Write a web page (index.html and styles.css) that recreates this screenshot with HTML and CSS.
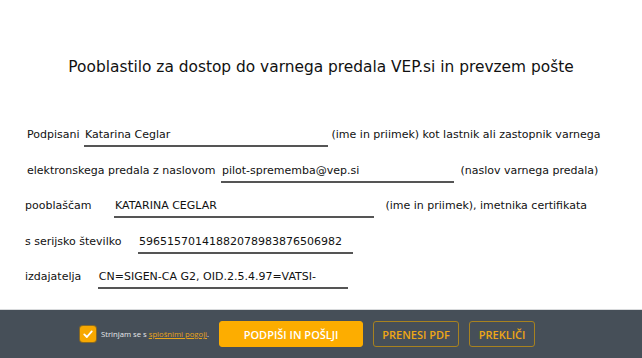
FILE: index.html
```html
<!DOCTYPE html>
<html lang="sl">
<head>
<meta charset="utf-8">
<title>Pooblastilo</title>
<link rel="stylesheet" href="styles.css">
</head>
<body>
<main class="doc">
  <h1 class="title">Pooblastilo za dostop do varnega predala VEP.si in prevzem pošte</h1>
  <div class="form">
    <p class="row row-a">Podpisani <span class="field f1">Katarina Ceglar</span> (ime in priimek) kot lastnik ali zastopnik varnega</p>
    <p class="row row-a">elektronskega predala z naslovom <span class="field f2">pilot-sprememba@vep.si</span> <span class="gap-l">(naslov varnega predala)</span></p>
    <p class="row row-b">pooblaščam <span class="field f3">KATARINA CEGLAR</span> <span class="gap-l2">(ime in priimek), imetnika certifikata</span></p>
    <p class="row row-b">s serijsko številko <span class="field f4">59651570141882078983876506982</span></p>
    <p class="row row-b">izdajatelja <span class="field f5">CN=SIGEN-CA G2, OID.2.5.4.97=VATSI-</span></p>
  </div>
</main>
<footer class="bar">
  <label class="agree">
    <span class="check"><svg viewBox="0 0 16 16" width="12" height="12"><path d="M3 8.5 L6.5 12 L13 4.5" fill="none" stroke="#fff" stroke-width="2.4" stroke-linecap="round" stroke-linejoin="round"/></svg></span>
    <span class="agree-text">Strinjam se s <a href="#" class="link">splošnimi pogoji</a>.</span>
  </label>
  <button class="btn btn-primary">PODPIŠI IN POŠLJI</button>
  <button class="btn btn-outline">PRENESI PDF</button>
  <button class="btn btn-outline">PREKLIČI</button>
</footer>
</body>
</html>
```

FILE: styles.css
```css
html, body {
  margin: 0;
  padding: 0;
  background: #fff;
}
body {
  width: 642px;
  height: 358px;
  overflow: hidden;
  display: flex;
  flex-direction: column;
  font-family: "DejaVu Sans", sans-serif;
  color: #111;
}
.doc {
  flex: 1;
  padding-top: 57px;
}
.title {
  margin: 0;
  text-align: center;
  font-weight: normal;
  font-size: 15.4px;
  line-height: 20px;
}
.form {
  padding-top: 50px;
  font-size: 11px;
}
.row {
  margin: 0;
  height: 35.5px;
  line-height: 16px;
  white-space: nowrap;
}
.row-a { padding-left: 27px; }
.row-b { padding-left: 25px; }
.field {
  display: inline-block;
  border-bottom: 2px solid #555;
  padding-bottom: 2px;
  padding-left: 1px;
  box-sizing: border-box;
  vertical-align: top;
}
.f1 { width: 244px; margin-left: 1px; }
.f2 { width: 233px; margin-left: 2px; }
.f3 { width: 260px; margin-left: 19px; }
.f4 { width: 215px; margin-left: 13px; }
.f5 { width: 250px; margin-left: 13px; }
.gap-l { margin-left: 3px; }
.gap-l2 { margin-left: 8px; }

.bar {
  height: 49px;
  background: #464f58;
  border-top: 1px solid #d8dadc;
  display: flex;
  align-items: center;
  padding-left: 80px;
  box-sizing: border-box;
  font-family: "Open Sans", sans-serif;
}
.agree {
  display: flex;
  align-items: center;
  gap: 5px;
  margin-right: 10px;
}
.check {
  width: 16px;
  height: 16px;
  border-radius: 3px;
  background: #f7a800;
  box-shadow: 0 0 0 1px #8a6a22;
  display: flex;
  align-items: center;
  justify-content: center;
}
.agree-text {
  font-size: 7.7px;
  color: #e6e8ea;
}
.link {
  color: #e7a419;
  text-decoration: underline;
}
.btn {
  height: 26px;
  border-radius: 3px;
  font-family: "Open Sans", sans-serif;
  font-weight: 600;
  font-size: 11px;
  padding: 0;
  margin-right: 10px;
  cursor: pointer;
}
.btn-primary {
  width: 144px;
  background: #fdad00;
  border: 1px solid #fdad00;
  color: #fff;
}
.btn-outline {
  background: transparent;
  border: 1px solid #a8821f;
  color: #eea716;
}
.btn-outline:nth-of-type(2) { width: 86px; }
.btn-outline:nth-of-type(3) { width: 66px; }
```
